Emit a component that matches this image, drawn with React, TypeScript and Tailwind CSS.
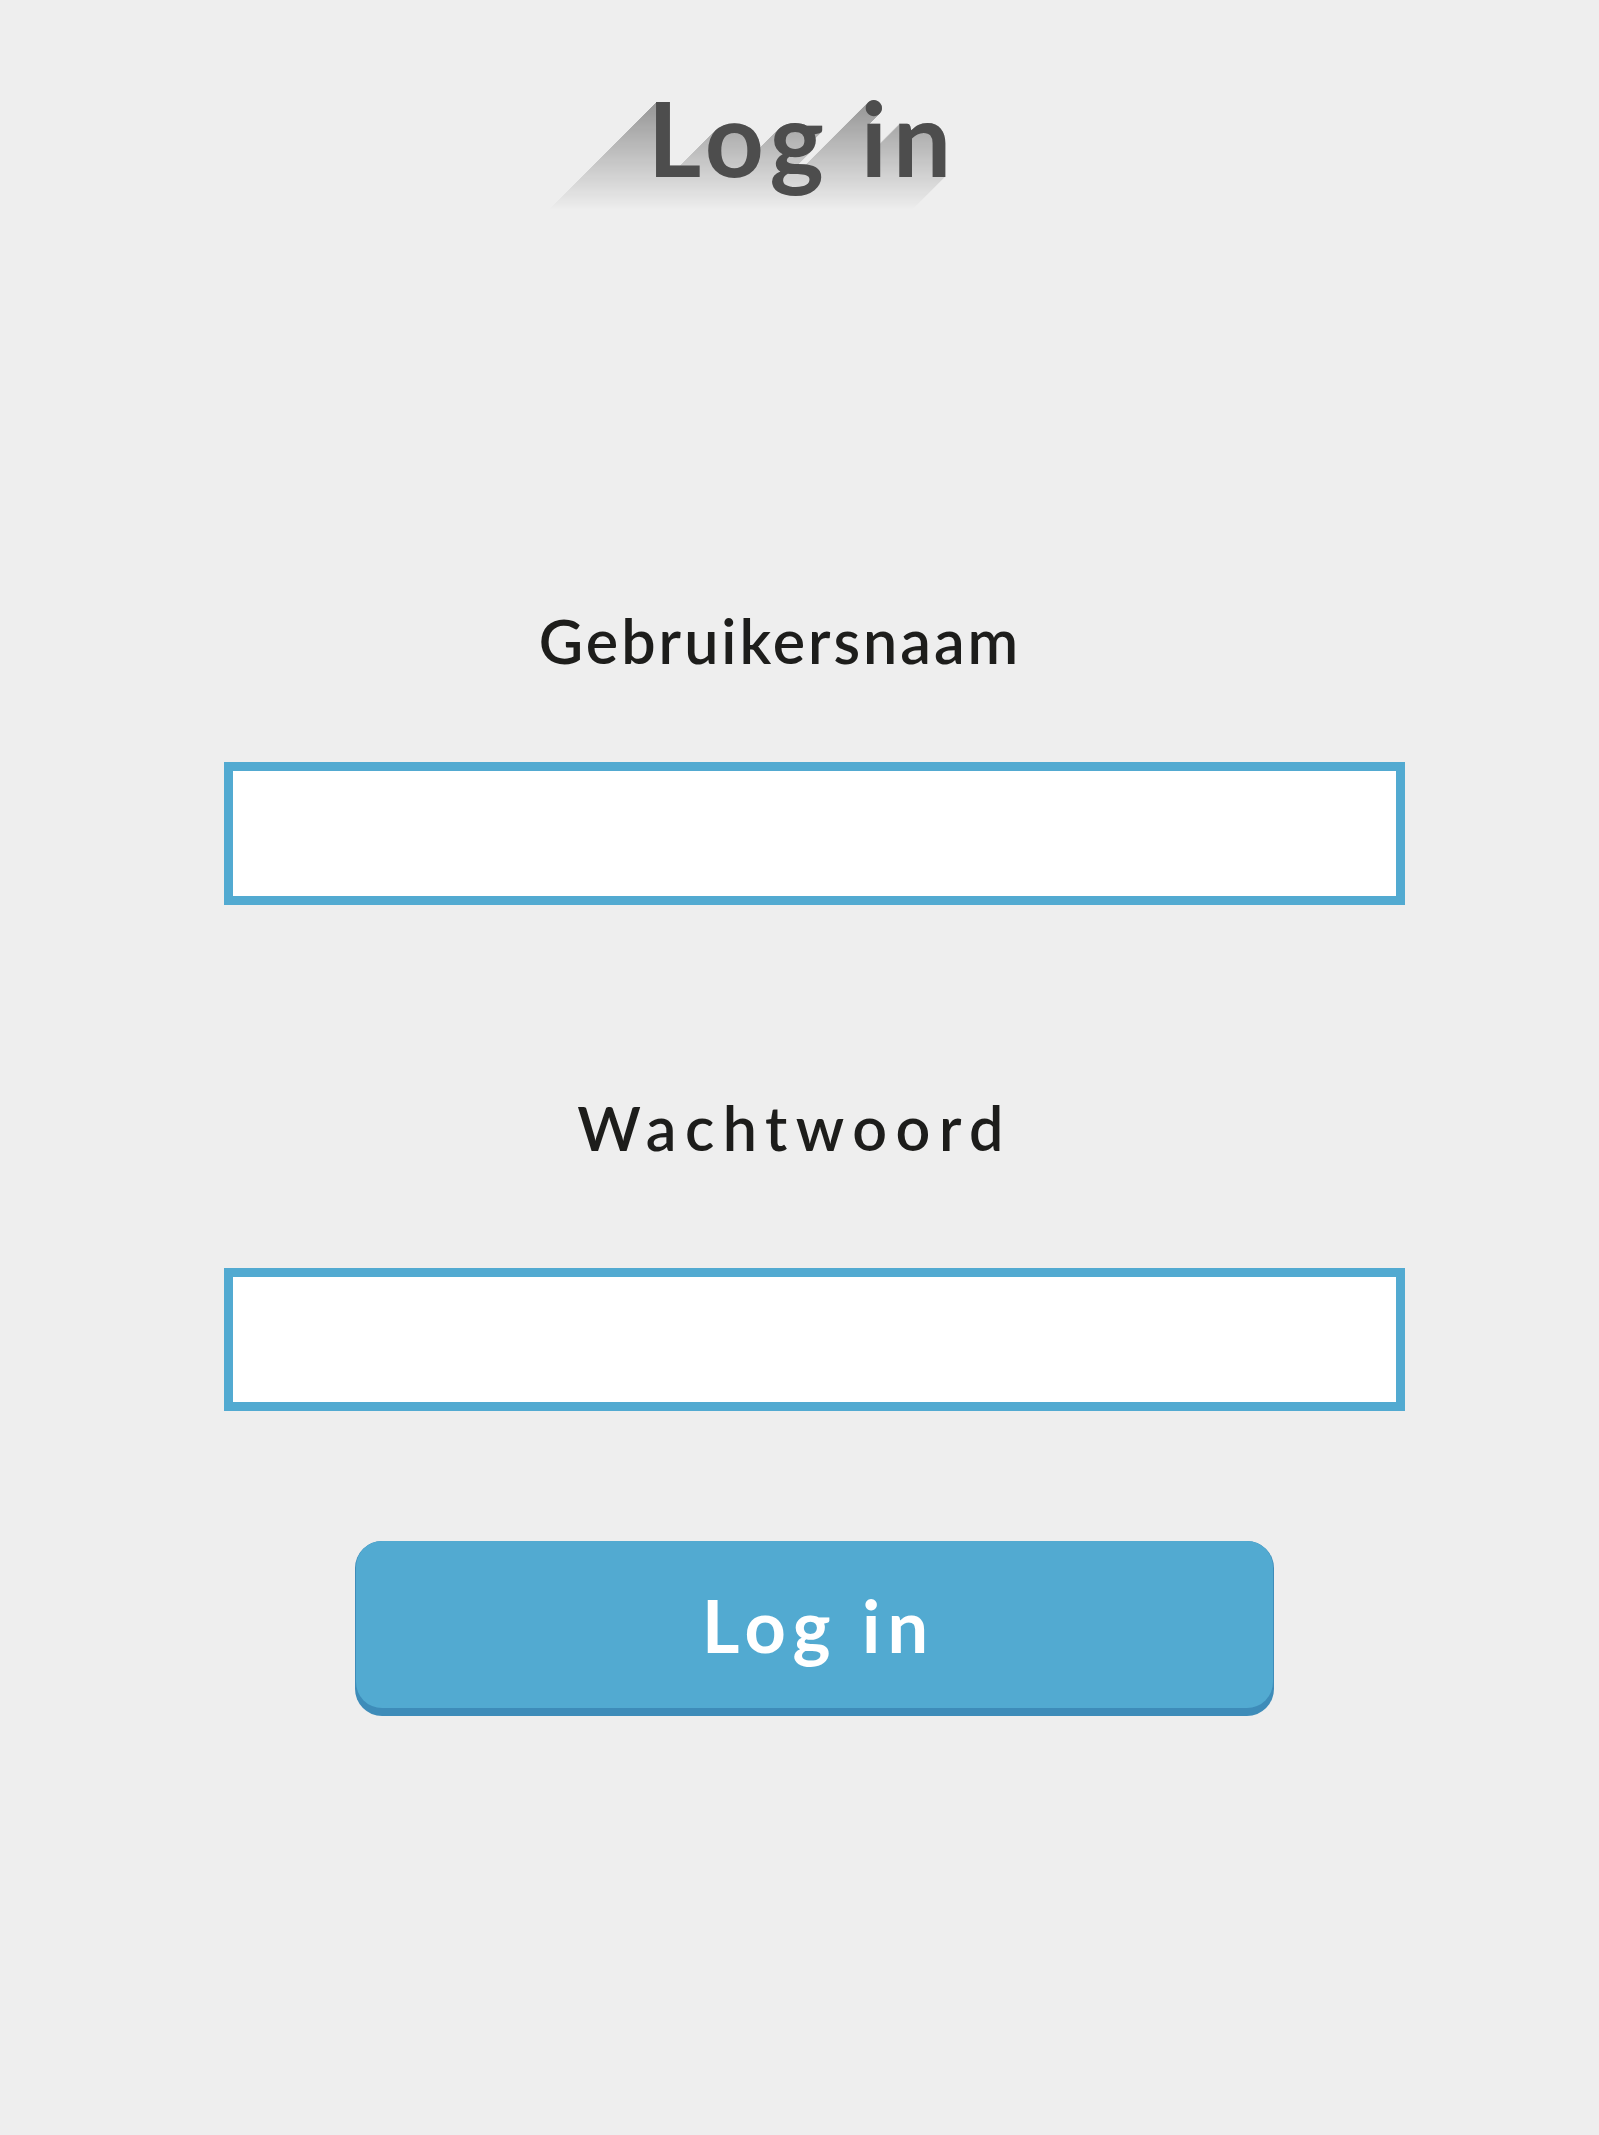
import React from 'react';

// long 45° shadow behind the title, built from stacked text-shadows
const longShadow = Array.from({ length: 125 }, (_, i) => `-${i + 1}px ${i + 1}px 0 #000`).join(', ');

function Title() {
  return (
    <div className="relative mt-[86px] ml-[6px] text-[103px] font-bold leading-none tracking-[6px] text-[#4d4d4d] [font-family:Lato,'Noto_Sans',sans-serif]">
      <span
        aria-hidden
        className="absolute top-0 right-0 -bottom-[40px] -left-[130px] pl-[130px] text-black [mask-image:linear-gradient(to_bottom,rgba(0,0,0,0.37)_17px,rgba(0,0,0,0)_124px)]"
        style={{ textShadow: longShadow }}
      >
        Log in
      </span>
      <span className="relative">Log in</span>
    </div>
  );
}

function Field({ label, type, labelClass, inputClass }: { label: string; type: string; labelClass: string; inputClass: string }) {
  return (
    <>
      <label
        className={`text-center text-[61px] font-semibold leading-none text-[#1d1d1b] [font-family:Lato,'Noto_Sans',sans-serif] ${labelClass}`}
      >
        {label}
      </label>
      <input
        type={type}
        className={`h-[143px] w-[1181px] border-[9px] border-[#52aad1] bg-white px-6 text-4xl outline-none ${inputClass}`}
      />
    </>
  );
}

export default function App() {
  return (
    <div className="flex min-h-[2135px] w-full flex-col items-center bg-[#eeeeee]">
      <Title />
      <form className="ml-[30px] flex flex-col items-center" onSubmit={(e) => e.preventDefault()}>
        <Field label="Gebruikersnaam" type="text" labelClass="mt-[421px] mr-[69px] tracking-[3px]" inputClass="mt-[91px]" />
        <Field label="Wachtwoord" type="password" labelClass="mt-[192px] mr-[40px] tracking-[8.5px]" inputClass="mt-[110px]" />
        <button
          type="submit"
          className="mt-[130px] w-[919px] rounded-[27px] bg-[#3e8cb9] px-[1px] pb-[8px]"
        >
          <div className="flex h-[167px] items-center justify-center rounded-[26px] bg-[#52aad1] pl-[8px] text-[72px] font-bold leading-none tracking-[7px] text-white [font-family:Lato,'Noto_Sans',sans-serif]">
            Log in
          </div>
        </button>
      </form>
    </div>
  );
}
